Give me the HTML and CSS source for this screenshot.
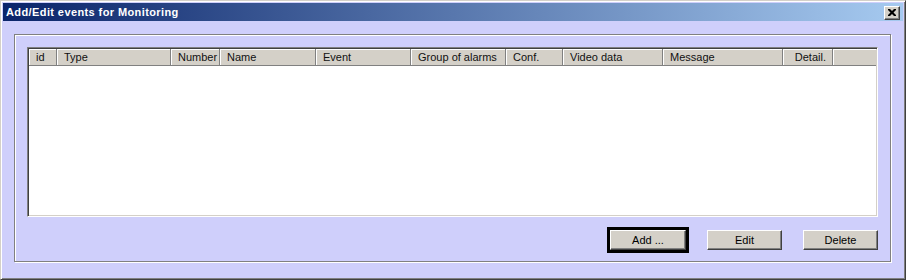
FILE: index.html
```html
<!DOCTYPE html>
<html>

<head>
  <meta charset="UTF-8">
  <title>Add/Edit events for Monitoring</title>
  <link rel="stylesheet" href="styles.css">
</head>

<body>

  <div class="window">
    <div class="titlebar">
      <span class="title">Add/Edit events for Monitoring</span>
      <button class="close">
        <svg width="8" height="7" viewBox="0 0 8 7">
          <path d="M0 0h2l2 2 2-2h2v1L5.5 3.5 8 6v1H6L4 5 2 7H0V6l2.5-2.5L0 1z" fill="#000" />
        </svg>
      </button>
    </div>

    <div class="group">
      <div class="list">
        <div class="list-header">
          <div class="col col-id">id</div>
          <div class="col col-type">Type</div>
          <div class="col col-number">Number</div>
          <div class="col col-name">Name</div>
          <div class="col col-event">Event</div>
          <div class="col col-group">Group of alarms</div>
          <div class="col col-conf">Conf.</div>
          <div class="col col-video">Video data</div>
          <div class="col col-message">Message</div>
          <div class="col col-detail">Detail.</div>
          <div class="col col-filler"></div>
        </div>
        <div class="list-body"></div>
      </div>

      <div class="buttons">
        <button class="btn btn-default">Add ...</button>
        <button class="btn">Edit</button>
        <button class="btn">Delete</button>
      </div>
    </div>
  </div>

</body>

</html>
```

FILE: styles.css
```css
* {
  box-sizing: border-box;
}

body {
  margin: 0;
  font-family: "Liberation Sans", Arial, sans-serif;
  font-size: 11px;
  color: #000;
}

.window {
  width: 906px;
  height: 280px;
  display: flex;
  flex-direction: column;
  padding: 2px;
  background-color: #cfcffb;
  border: 1px solid;
  border-color: #d4d0c8 #404040 #404040 #d4d0c8;
  box-shadow: inset 1px 1px #fff, inset -1px -1px #808080;
}

.titlebar {
  height: 18px;
  display: flex;
  align-items: center;
  justify-content: space-between;
  padding: 0 3px 0 3px;
  background: linear-gradient(to right, #0a246a, #a6caf0);
  color: #fff;
  font-weight: bold;
}

.title {
  letter-spacing: 0.4px;
}

.close {
  width: 16px;
  height: 14px;
  margin-top: 1px;
  padding: 0;
  display: flex;
  align-items: center;
  justify-content: center;
  background-color: #d4d0c8;
  border: 1px solid;
  border-color: #fff #404040 #404040 #fff;
  box-shadow: inset -1px -1px #808080;
}

.group {
  flex: 1;
  display: flex;
  flex-direction: column;
  margin: 13px 12px 15px 11px;
  padding: 12px 12px 11px 12px;
  border: 1px solid #808080;
  box-shadow: 1px 1px 0 #fff, inset 1px 1px 0 #fff;
}

.list {
  height: 170px;
  display: flex;
  flex-direction: column;
  padding: 1px;
  background-color: #fff;
  border: 1px solid;
  border-color: #808080 #fff #fff #808080;
  box-shadow: inset 1px 1px #404040, inset -1px -1px #d4d0c8;
}

.list-header {
  height: 17px;
  display: flex;
  background-color: #d4d0c8;
}

.col {
  flex: none;
  padding-top: 1px;
  padding-left: 7px;
  line-height: 15px;
  white-space: nowrap;
  color: #111;
  border-right: 1px solid #808080;
  border-bottom: 1px solid #808080;
  box-shadow: inset 1px 1px #fff;
}

.col-id { width: 28px; }
.col-type { width: 114px; }
.col-number { width: 49px; text-align: right; padding-right: 5px; }
.col-name { width: 96px; }
.col-event { width: 95px; }
.col-group { width: 95px; }
.col-conf { width: 57px; }
.col-video { width: 100px; }
.col-message { width: 120px; }
.col-detail { width: 50px; text-align: right; padding-right: 6px; }
.col-filler { flex: 1; border-right: none; }

.list-body {
  flex: 1;
}

.buttons {
  display: flex;
  justify-content: flex-end;
  gap: 21px;
  margin-top: 13px;
}

.btn {
  width: 75px;
  height: 20px;
  padding: 0;
  font-family: "Liberation Sans", Arial, sans-serif;
  font-size: 11px;
  color: #000;
  background-color: #d4d0c8;
  border: 1px solid;
  border-color: #fff #404040 #404040 #fff;
  box-shadow: inset -1px -1px #808080;
}

.btn-default {
  width: 76px;
  outline: 3px solid #000;
}
```
